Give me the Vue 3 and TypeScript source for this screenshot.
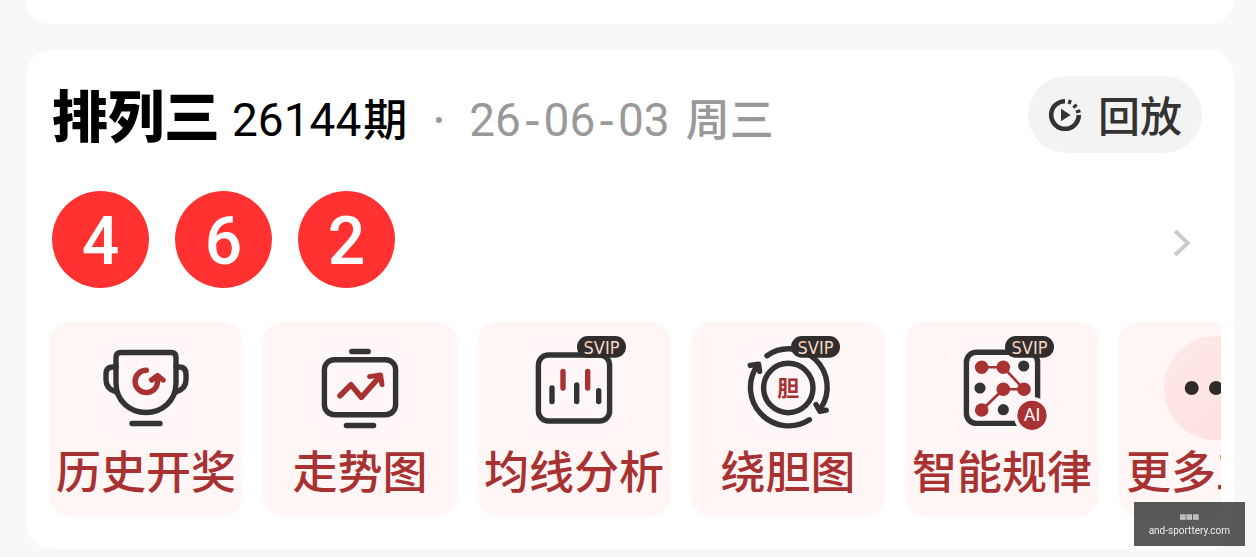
<script setup lang="ts">
interface Tool {
  id: 'history' | 'trend' | 'average' | 'wheel' | 'pattern' | 'more'
  label: string
  svip: boolean
}

const balls: number[] = [4, 6, 2]

const tools: Tool[] = [
  { id: 'history', label: '历史开奖', svip: false },
  { id: 'trend', label: '走势图', svip: false },
  { id: 'average', label: '均线分析', svip: true },
  { id: 'wheel', label: '绕胆图', svip: true },
  { id: 'pattern', label: '智能规律', svip: true },
  { id: 'more', label: '更多工具', svip: false },
]
</script>

<template>
  <main class="page">
    <section class="card card-previous"></section>

    <section class="card lottery">
      <header class="head">
        <h2 class="title">排列三</h2>
        <p class="issue"><span class="num">26144</span><span>期</span></p>
        <span class="dot"></span>
        <p class="date">
          <span class="num">26<span class="dash">-</span>06<span class="dash">-</span>03</span>
          <span>周三</span>
        </p>
        <button class="replay" type="button">
          <svg class="replay-icon" viewBox="0 0 34 34" aria-hidden="true">
            <path d="M17 3.2A13.8 13.8 0 1 0 30.8 17" fill="none" stroke="#333" stroke-width="4.6" />
            <path d="M21 6l1.4-4M25.4 9.6l3.2-3M28 14l4.4-1.2" fill="none" stroke="#333" stroke-width="3.2" />
            <path d="M13 10.8v12.4l9.6-6.2z" fill="#333" />
          </svg>
          <span class="replay-label">回放</span>
        </button>
      </header>

      <div class="result">
        <ul class="balls">
          <li v-for="(n, i) in balls" :key="i" class="ball">{{ n }}</li>
        </ul>
        <button class="next" type="button" aria-label="详情">
          <svg class="next-icon" viewBox="0 0 18 28" aria-hidden="true">
            <path d="M2 2L14.8 14L2 26" fill="none" stroke="#ccc" stroke-width="4" />
          </svg>
        </button>
      </div>

      <nav class="tools">
        <a v-for="tool in tools" :key="tool.id" class="tool" href="#">
          <svg class="tool-icon" viewBox="0 0 104 104" aria-hidden="true">
            <defs>
              <linearGradient :id="'gold-' + tool.id" x1="0" y1="0" x2="1" y2="1">
                <stop offset="0" stop-color="#e9a98c" />
                <stop offset="0.5" stop-color="#fbe3d5" />
                <stop offset="1" stop-color="#eab79c" />
              </linearGradient>
              <linearGradient id="blush" x1="0" y1="0" x2="1" y2="1">
                <stop offset="0" stop-color="#ffe9e5" />
                <stop offset="0.5" stop-color="#ffe4e4" />
                <stop offset="1" stop-color="#ffdede" />
              </linearGradient>
            </defs>
            <g v-if="tool.id !== 'more'">
              <rect width="104" height="104" rx="22" class="plate" />
              <path
                class="plate-edge"
                :class="{ bright: tool.id === 'average' }"
                d="M1 21Q3 4 20 1M84 1Q101 4 103 21M103 83Q101 100 84 103M20 103Q3 100 1 83"
              />
            </g>

            <g v-if="tool.id === 'history'" class="line">
              <path d="M27 16.5H77Q82 16.5 82 21.5V47C82 65 68 76.5 52 76.5S22 65 22 47V21.5Q22 16.5 27 16.5Z" />
              <path d="M22 31H19Q12 31 12 38V44C12 51 16 54 22 56" />
              <path d="M82 31H85Q92 31 92 38V44C92 51 88 54 82 56" />
              <path d="M38 87.5H66" />
              <g class="red">
                <path d="M52.3 34.2A11.2 11.2 0 1 0 63.5 45.4V42" />
                <path d="M57.6 44L63.5 39.6L69 44" />
              </g>
            </g>

            <g v-else-if="tool.id === 'trend'" class="line">
              <rect x="16.4" y="23.7" width="71.2" height="55" rx="10" />
              <path d="M43.8 15.5H60.2M38.4 89.5H65.6" />
              <g class="red">
                <path d="M32 59.7L43 48.8L53.3 61.3L71 41.5" stroke-width="5.6" />
                <path d="M61.6 40.6L72.5 39L74 48.6" stroke-width="5" />
              </g>
            </g>

            <g v-else-if="tool.id === 'average'" class="line">
              <rect x="16.4" y="19" width="71.2" height="66" rx="10" />
              <path d="M30 52V65.6M54.7 49V65.6M76.7 54.6V65.6" />
              <path class="red" d="M41 35.5V52M65.7 35.5V52" />
            </g>

            <g v-else-if="tool.id === 'wheel'" class="line">
              <circle cx="52.3" cy="52" r="24.7" />
              <path d="M31 19.7A38.3 38.3 0 0 1 85 72" />
              <path d="M80 68.5L84 75.4L90.2 74.2" />
              <path d="M73.4 83.8A38.3 38.3 0 0 1 21.5 29.4" />
              <path d="M14.2 29.4L22.6 28.2L23.6 35.4" />
              <text x="52.3" y="60.4" class="glyph">胆</text>
            </g>

            <g v-else-if="tool.id === 'pattern'" class="line">
              <rect x="16.4" y="16.2" width="71.2" height="71.2" rx="10" />
              <path class="red" stroke-width="2.6" d="M31.7 31.3H53.3L74 53.3H53.3L31.7 74" />
              <g class="spots">
                <circle cx="73.7" cy="30" r="5.6" />
                <circle cx="30" cy="52" r="5.6" />
                <circle cx="53.3" cy="73.7" r="5.6" />
              </g>
              <g class="red-spots">
                <circle cx="31.7" cy="31.3" r="6.8" />
                <circle cx="53.3" cy="31.3" r="6.8" />
                <circle cx="74" cy="53.3" r="6.8" />
                <circle cx="53.3" cy="53.3" r="6.8" />
                <circle cx="31.7" cy="74" r="6.8" />
              </g>
              <circle cx="82" cy="79.3" r="18.4" class="halo" />
              <g class="red-spots"><circle cx="82" cy="79.3" r="14.6" /></g>
              <text x="82" y="85.4" class="ai">AI</text>
            </g>

            <g v-else>
              <circle cx="52" cy="52" r="52" fill="url(#blush)" />
              <circle cx="27.7" cy="52" r="7" fill="#2f2b29" />
              <circle cx="52" cy="52" r="7" fill="#2f2b29" />
              <circle cx="76.3" cy="52" r="7" fill="#2f2b29" />
            </g>

            <g v-if="tool.svip">
              <rect x="55" y="0" width="49" height="21.7" rx="10.8" fill="#302d2c" />
              <text x="79.5" y="17.6" class="svip" :fill="`url(#gold-${tool.id})`">SVIP</text>
            </g>
          </svg>
          <span class="tool-label">{{ tool.label }}</span>
        </a>
      </nav>
    </section>

    <aside class="watermark">
      <span class="boxes">▩▩▩</span>
      <span>and-sporttery.com</span>
    </aside>
  </main>
</template>

<style>
body {
  background: #f8f8f8;
  overflow: hidden;
}
</style>

<style scoped>
.page {
  box-sizing: border-box;
  min-height: 100vh;
  padding: 0 22px 8px 26px;
  font-family: "Noto Sans CJK SC", sans-serif;
  font-weight: 500;
  color: #000;
}

.card {
  background: #fff;
  border-radius: 26px;
}

.card-previous {
  height: 24px;
  margin-bottom: 26px;
  border-radius: 0 0 24px 24px;
}

.lottery {
  padding: 26px 0 33px;
}

.head {
  display: flex;
  align-items: center;
  height: 77px;
  padding: 0 32px 0 26px;
  white-space: nowrap;
}

.title,
.issue,
.date {
  margin: 0;
}

.title {
  padding-bottom: 4px;
  font-size: 56px;
  font-weight: 900;
  line-height: 72px;
}

.issue,
.date {
  display: flex;
  align-items: baseline;
  padding-top: 8px;
  line-height: 68px;
  font-size: 44px;
}

.issue {
  gap: 2px;
  margin-left: 12px;
}

.date {
  gap: 16px;
  color: #999;
}

.num {
  font-family: Roboto, sans-serif;
  font-size: 46px;
  font-weight: 400;
}

.dash {
  padding: 0 3px;
  font-family: "DejaVu Sans", sans-serif;
}

.dot {
  width: 6px;
  height: 6px;
  margin: 10px 27px 0 29px;
  border-radius: 50%;
  background: #999;
}

.replay {
  display: flex;
  align-items: center;
  gap: 16px;
  height: 77px;
  margin-left: auto;
  padding: 0 20px;
  border: 0;
  border-radius: 39px;
  background: #f3f3f3;
  color: #333;
  font-family: inherit;
  font-size: 42px;
  font-weight: 500;
}

.replay-icon {
  width: 34px;
  height: 34px;
}

.replay-label {
  padding-bottom: 2px;
  line-height: 75px;
}

.result {
  display: flex;
  align-items: center;
  justify-content: space-between;
  margin-top: 38px;
  padding: 0 43px 0 26px;
}

.balls {
  display: flex;
  gap: 26px;
  margin: 0;
  padding: 0;
  list-style: none;
}

.ball {
  width: 97px;
  height: 97px;
  border-radius: 50%;
  background: #ff3131;
  color: #fff;
  font-family: Roboto, sans-serif;
  font-size: 66px;
  font-weight: 500;
  line-height: 102px;
  text-align: center;
}

.next {
  display: flex;
  padding: 6px 0 0;
  border: 0;
  background: none;
}

.next-icon {
  width: 18px;
  height: 28px;
}

.tools {
  display: flex;
  gap: 20px;
  margin: 34px 13px 0 23px;
  overflow: hidden;
}

.tool {
  display: flex;
  flex: none;
  flex-direction: column;
  align-items: center;
  box-sizing: border-box;
  width: 194px;
  height: 194px;
  padding-top: 14px;
  border-radius: 20px;
  background: #fff6f5;
  color: #a83232;
  text-decoration: none;
}

.tool-icon {
  flex: none;
  width: 104px;
  height: 104px;
}

.tool-label {
  font-size: 45px;
  line-height: 60px;
  white-space: nowrap;
}

.plate {
  fill: #fff7f7;
}

.plate-edge {
  fill: none;
  stroke: #fff;
  stroke-width: 1;
  stroke-dasharray: 6 4;
  opacity: 0.7;
}

.plate-edge.bright {
  stroke-dasharray: none;
  opacity: 1;
}

.line {
  fill: none;
  stroke: #333;
  stroke-width: 5.4;
  stroke-linecap: round;
  stroke-linejoin: round;
}

.red {
  stroke: #a83232;
}

.red-spots {
  fill: #a83232;
}

.red-spots,
.spots {
  stroke: none;
}

.spots {
  fill: #333;
}

.halo {
  fill: #fff7f7;
  stroke: none;
}

.glyph {
  fill: #a83232;
  stroke: none;
  font-size: 22px;
  font-weight: 700;
  text-anchor: middle;
}

.ai {
  fill: #fff;
  stroke: none;
  font-family: Roboto, sans-serif;
  font-size: 18px;
  font-weight: 400;
  text-anchor: middle;
}

.svip {
  font-family: "Liberation Sans Narrow", "DejaVu Sans Condensed", sans-serif;
  font-size: 18px;
  font-weight: 400;
  text-anchor: middle;
}

.watermark {
  position: fixed;
  right: 11px;
  bottom: 11px;
  display: flex;
  flex-direction: column;
  align-items: center;
  justify-content: center;
  box-sizing: border-box;
  height: 44px;
  padding: 0 15px;
  background: rgba(64, 64, 64, 0.87);
  color: #eee;
  font-family: Roboto, sans-serif;
  font-size: 10px;
  font-weight: 400;
  line-height: 13px;
}

.boxes {
  font-family: "DejaVu Sans", sans-serif;
  font-size: 7px;
}
</style>
